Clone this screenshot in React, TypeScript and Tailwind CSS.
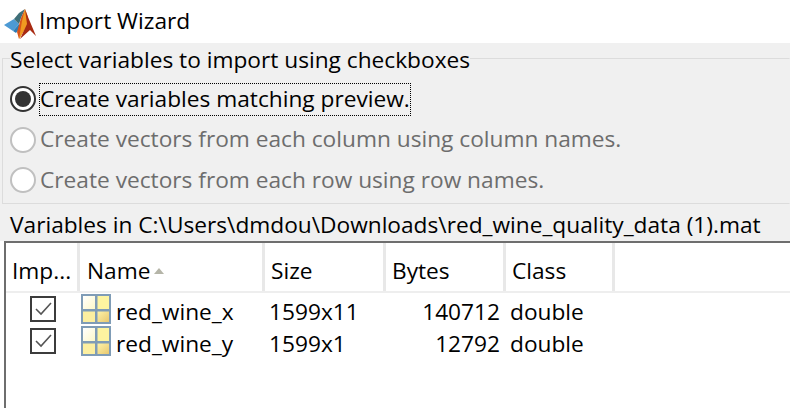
const font = "font-['Open_Sans','Noto_Sans',sans-serif]"

const MatlabLogo = () => (
  <svg width="34" height="36" viewBox="0 0 34 36" className="shrink-0">
    <polygon points="2,21 12,15 17,20 11,27" fill="#4c9ad4" />
    <polygon points="11,27 17,20 18,24 14,29" fill="#2f7cb4" />
    <polygon points="12,15 17,9 23,5 19,14 17,20" fill="#3f6f78" />
    <polygon points="23,5 19,14 15,28 17,35 22,26" fill="#d8541a" />
    <polygon points="23,5 20,17 17,35 25,22 26,13" fill="#f09a20" />
    <polygon points="23,5 26,13 34,32 28,26 18,35 25,20" fill="#a82a12" />
  </svg>
)

const Radio = ({ checked, disabled, label, focused }: any) => (
  <div className="flex h-[40.5px] items-center">
    <div className={`flex h-[26px] w-[26px] shrink-0 items-center justify-center rounded-full border-[2px] bg-white ${disabled ? 'border-[#c0c0c0]' : 'border-[#333333]'}`}>
      {checked && <div className="h-[16px] w-[16px] rounded-full bg-[#333333]" />}
    </div>
    <div className={`ml-[3px] flex h-[33px] items-center whitespace-nowrap border border-dotted ${focused ? 'border-black' : 'border-transparent'} ${disabled ? 'text-[#6d6d6d]' : 'text-black'}`}>
      {label}
    </div>
  </div>
)

const GridIcon = () => (
  <svg width="30" height="30" viewBox="0 0 30 30" className="shrink-0">
    <defs>
      <linearGradient id="cell" x1="0" y1="0" x2="1" y2="1">
        <stop offset="0" stopColor="#fdf3a8" />
        <stop offset="1" stopColor="#e8c870" />
      </linearGradient>
      <linearGradient id="cellWhite" x1="0" y1="0" x2="1" y2="1">
        <stop offset="0" stopColor="#ffffff" />
        <stop offset="1" stopColor="#fdf8c8" />
      </linearGradient>
    </defs>
    <rect x="0" y="0" width="30" height="30" fill="#7f9cb6" />
    <rect x="2" y="2" width="12" height="13" fill="url(#cellWhite)" />
    <rect x="16.5" y="2" width="11.5" height="13" fill="#fdf4a0" />
    <rect x="2" y="17.5" width="12" height="10.5" fill="#fcefa0" />
    <rect x="16.5" y="17.5" width="11.5" height="10.5" fill="url(#cell)" />
  </svg>
)

const CheckBox = () => (
  <div className="flex h-[26px] w-[26px] items-center justify-center border-[2px] border-[#3c3c3c] bg-white">
    <svg width="20" height="16" viewBox="0 0 20 16" fill="none">
      <path d="M3 8 L8 13 L18 2" stroke="#555555" strokeWidth="1.6" />
    </svg>
  </div>
)

const rowCols = 'grid grid-cols-[74px_185px_121px_120px_109px_1fr]'

const HeaderCell = ({ children, pad = 'pl-[6px]' }: any) => (
  <div className={`flex h-[48px] items-center border-r-[3px] border-[#e8e8e8] pt-[8px] ${pad}`}>{children}</div>
)

const Row = ({ name, size, bytes }: any) => (
  <div className="grid h-[32px] grid-cols-[74px_185px_121px_120px_109px_1fr] items-center">
    <div className="flex justify-center"><CheckBox /></div>
    <div className="flex items-center gap-[5px] pl-[1px]">
      <GridIcon />
      <span className="pt-[6px]">{name}</span>
    </div>
    <div className="pl-[4px] pt-[6px]">{size}</div>
    <div className="pr-[6px] pt-[6px] text-right">{bytes}</div>
    <div className="pl-[4px] pt-[6px]">double</div>
    <div />
  </div>
)

export default function App() {
  return (
    <div className={`${font} flex h-[408px] w-[790px] flex-col overflow-hidden bg-white text-[22.7px] leading-none text-black`}>
      <div className="flex h-[43px] shrink-0 items-center gap-[3px] pl-[2px]">
        <MatlabLogo />
        <span>Import Wizard</span>
      </div>
      <div className="h-[198px] shrink-0 bg-[#f0f0f0] pl-[2px]">
        <fieldset className="h-[161px] border-[1px] border-t-[#dcdcdc] border-l-[#dcdcdc] border-b-[#dcdcdc] border-r-transparent pl-[7px]">
          <legend className="px-0 pt-[4px] leading-[26px]">Select variables to import using checkboxes</legend>
          <div className="pt-[6px]">
            <Radio checked focused label="Create variables matching preview." />
            <Radio disabled label="Create vectors from each column using column names." />
            <Radio disabled label="Create vectors from each row using row names." />
          </div>
        </fieldset>
        <div className="pl-[8px] pt-[10px]">Variables in C:\Users\dmdou\Downloads\red_wine_quality_data (1).mat</div>
      </div>
      <div className="ml-[4px] min-h-0 flex-1 border-l-[2px] border-t-[2px] border-[#6e6e6e]">
        <div className={`${rowCols} border-b-[2px] border-[#eeeeee]`}>
          <HeaderCell>Imp...</HeaderCell>
          <HeaderCell pad="pl-[7px]">
            <span>Name</span>
            <svg width="10" height="6" viewBox="0 0 10 6" className="ml-[4px]"><path d="M0 6 L5 0 L10 6 Z" fill="#b5b5a8" /></svg>
          </HeaderCell>
          <HeaderCell>Size</HeaderCell>
          <HeaderCell>Bytes</HeaderCell>
          <HeaderCell>Class</HeaderCell>
          <div />
        </div>
        <Row name="red_wine_x" size="1599x11" bytes="140712" />
        <Row name="red_wine_y" size="1599x1" bytes="12792" />
      </div>
    </div>
  )
}
